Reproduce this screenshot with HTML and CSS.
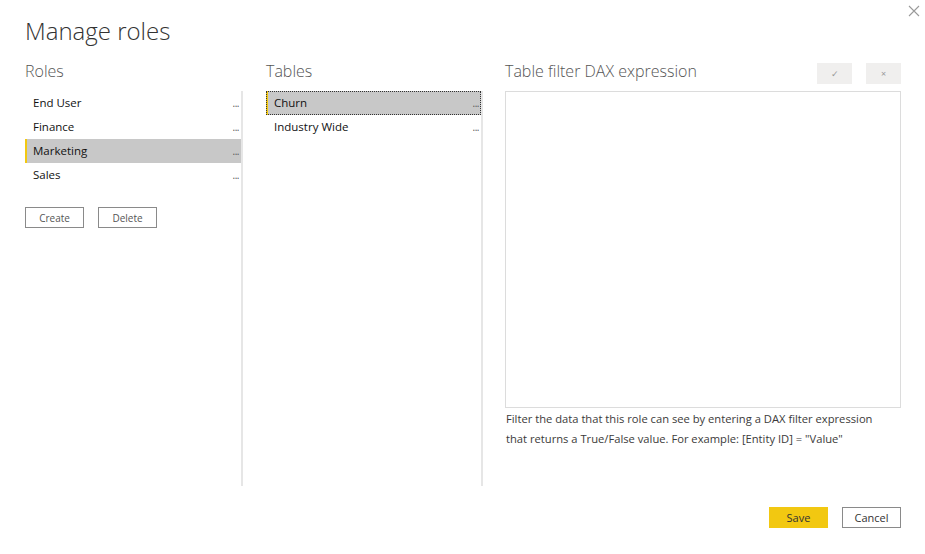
FILE: index.html
```html
<!DOCTYPE html>
<html>

<head>
    <link rel="stylesheet" href="styles.css">
</head>

<body>

    <div class="dialog">
        <svg class="close" width="12" height="12" viewBox="0 0 12 12">
            <path d="M1 1 L11 11 M11 1 L1 11" stroke="#9a9a9a" stroke-width="1.1" fill="none" />
        </svg>

        <h1 class="title">Manage roles</h1>

        <div class="columns">
            <div class="col roles">
                <h2 class="heading">Roles</h2>
                <div class="col-body">
                    <div class="list">
                        <div class="row"><span>End User</span><span class="more">...</span></div>
                        <div class="row"><span>Finance</span><span class="more">...</span></div>
                        <div class="row selected"><span>Marketing</span><span class="more">...</span></div>
                        <div class="row"><span>Sales</span><span class="more">...</span></div>
                    </div>
                    <div class="actions">
                        <button class="btn">Create</button>
                        <button class="btn">Delete</button>
                    </div>
                </div>
            </div>

            <div class="col tables">
                <h2 class="heading">Tables</h2>
                <div class="col-body">
                    <div class="list">
                        <div class="row selected focused"><span>Churn</span><span class="more">...</span></div>
                        <div class="row"><span>Industry Wide</span><span class="more">...</span></div>
                    </div>
                </div>
            </div>

            <div class="col dax">
                <div class="dax-head">
                    <h2 class="heading">Table filter DAX expression</h2>
                    <div class="tools">
                        <span class="tool">&#10003;</span>
                        <span class="tool">&#215;</span>
                    </div>
                </div>
                <div class="editor"></div>
                <p class="hint">Filter the data that this role can see by entering a DAX filter expression<br>that returns a True/False value. For example: [Entity ID] = "Value"</p>
            </div>
        </div>

        <div class="footer">
            <button class="btn primary">Save</button>
            <button class="btn cancel">Cancel</button>
        </div>
    </div>

</body>

</html>
```

FILE: styles.css
```css
* {
    box-sizing: border-box;
}

body {
    margin: 0;
    background: #fff;
    font-family: "Open Sans", "Noto Sans", sans-serif;
    color: #252423;
}

.dialog {
    position: relative;
    width: 925px;
    height: 554px;
    padding: 14px 24px 0 25px;
}

.close {
    position: absolute;
    top: 5px;
    right: 5px;
}

.title {
    margin: 0;
    font-size: 24px;
    font-weight: 300;
    line-height: 34px;
    color: #333;
}

.columns {
    display: flex;
    margin-top: 12px;
}

.col {
    flex-shrink: 0;
}

.heading {
    margin: 0;
    height: 31px;
    font-size: 16px;
    font-weight: 300;
    line-height: 22px;
    color: #555;
    white-space: nowrap;
}

.col-body {
    height: 395px;
    border-right: 2px solid #e6e6e6;
}

.roles {
    width: 218px;
}

.tables {
    width: 240px;
    padding-left: 23px;
}

.dax {
    width: 418px;
    padding-left: 22px;
}

.row {
    display: flex;
    justify-content: space-between;
    height: 24px;
    padding: 0 2px 0 8px;
    font-size: 11.5px;
    font-weight: 500;
    line-height: 24px;
    color: #111;
}

.more {
    font-size: 10px;
    font-weight: 400;
    color: #555;
    letter-spacing: -0.5px;
}

.selected {
    background: #c8c8c8;
    border-left: 2px solid #f2c811;
    padding-left: 6px;
}

.focused {
    outline: 1px dotted #333;
    outline-offset: -1px;
}

.actions {
    display: flex;
    gap: 14px;
    margin-top: 20px;
}

.btn {
    height: 21px;
    width: 59px;
    padding: 0;
    background: #fff;
    border: 1px solid #8a8a8a;
    font-family: "Open Sans", "Noto Sans", sans-serif;
    font-size: 10px;
    color: #555;
}

.dax-head {
    display: flex;
    justify-content: space-between;
}

.tools {
    display: flex;
    gap: 14px;
    margin-top: 3px;
}

.tool {
    width: 35px;
    height: 21px;
    background: #f0efee;
    text-align: center;
    font-size: 9px;
    line-height: 21px;
    color: #999;
}

.editor {
    height: 317px;
    border: 1px solid #dcdcdc;
}

.hint {
    margin: 1px 0 0 1px;
    font-size: 11.2px;
    line-height: 20px;
    color: #3b3a39;
}

.footer {
    display: flex;
    justify-content: flex-end;
    gap: 14px;
    margin-top: 21px;
}

.primary {
    background: #f2c811;
    border-color: #f2c811;
    color: #333;
    font-size: 11px;
}

.cancel {
    font-size: 11px;
    color: #333;
}
```
